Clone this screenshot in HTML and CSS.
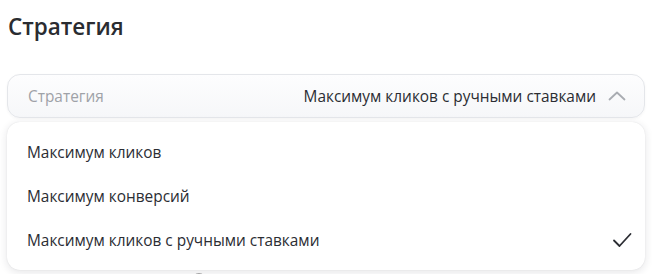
FILE: index.html
```html
<!DOCTYPE html>
<html lang="ru">
<head>
<meta charset="utf-8">
<link rel="stylesheet" href="styles.css">
</head>
<body>
<div class="page">
  <h2 class="title">Стратегия</h2>
  <div class="select-wrap">
    <div class="field">
      <span class="field-label">Стратегия</span>
      <span class="field-value">Максимум кликов с ручными ставками</span>
      <svg class="chevron" width="18" height="10" viewBox="0 0 18 10"><path d="M1.5 8.5L9 1.5l7.5 7" fill="none" stroke="#a9acb2" stroke-width="1.8" stroke-linecap="round" stroke-linejoin="round"/></svg>
    </div>
    <ul class="menu">
      <li class="item">Максимум кликов</li>
      <li class="item">Максимум конверсий</li>
      <li class="item selected">Максимум кликов с ручными ставками
        <svg class="check" width="20" height="16" viewBox="0 0 20 16"><path d="M2 8.5l5.5 5.5L18.5 2" fill="none" stroke="#2b2d33" stroke-width="1.8" stroke-linecap="round" stroke-linejoin="round"/></svg>
      </li>
    </ul>
    <div class="below">Сайты в Яндекс.Маркет <span class="info">?</span></div>
  </div>
</div>
</body>
</html>
```
FILE: styles.css
```css
html, body { margin: 0; padding: 0; background: #ffffff; }
body { font-family: "Open Sans", "Noto Sans", sans-serif; color: #222326; }
.page { padding: 11px 7px 0 7px; }
.title { margin: 0; font-size: 22.5px; font-weight: 600; line-height: 32px; padding-left: 1px; color: #2a2c31; }
.select-wrap { position: relative; margin-top: 31px; }
.field {
  height: 42px; border: 1px solid #e4e6ea; border-radius: 13px;
  background: linear-gradient(#fdfdfe, #f6f7f9);
  display: flex; align-items: center; padding: 0 18px 0 20px;
  box-shadow: 0 1px 3px rgba(0,0,0,0.04);
}
.field-label { color: #9fa2a8; font-size: 15.4px; }
.field-value { margin-left: auto; font-size: 15.4px; color: #2b2d33; }
.chevron { margin-left: 12px; }
.menu {
  position: absolute; left: 0; right: 0; top: 48px; margin: 0; padding: 8px 0;
  list-style: none; background: #fff; border-radius: 13px;
  box-shadow: 0 2px 8px rgba(30,35,50,0.12), 0 0 1px rgba(30,35,50,0.15);
  z-index: 2;
}
.item { height: 44px; display: flex; align-items: center; padding: 0 20px 0 20px; font-size: 15.4px; color: #2b2d33; }
.check { margin-left: auto; margin-right: -7px; }
.below { margin-top: 151px; font-size: 15px; font-weight: 600; padding-left: 1px; }
.info { display: inline-block; width: 14px; height: 14px; border: 1px solid #aaa; border-radius: 50%; font-size: 10px; text-align: center; }
```
